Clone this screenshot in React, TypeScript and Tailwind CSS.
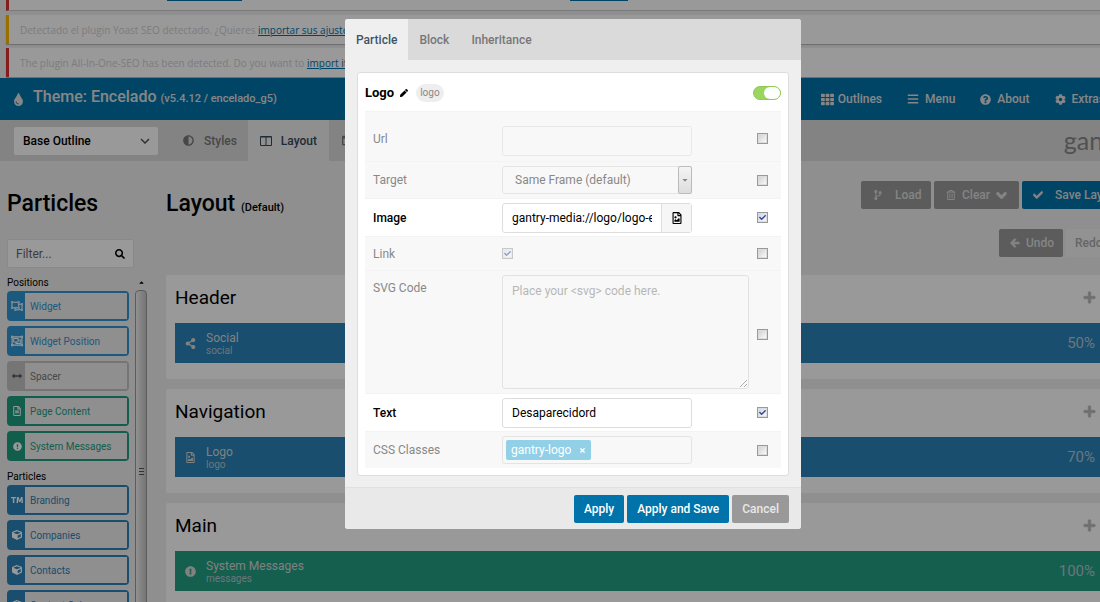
import React, { useState } from 'react';
import {
  FaAdjust,
  FaArrowLeft,
  FaArrowRight,
  FaArrowsAltH,
  FaBars,
  FaCaretDown,
  FaCaretUp,
  FaCheck,
  FaChevronDown,
  FaCodeBranch,
  FaCog,
  FaColumns,
  FaCube,
  FaExclamationCircle,
  FaPen,
  FaPlus,
  FaQuestionCircle,
  FaRegFileAlt,
  FaRegFileImage,
  FaRegObjectGroup,
  FaRegObjectUngroup,
  FaRegTrashAlt,
  FaSearch,
  FaShareAlt,
  FaTh,
  FaTimes,
  FaTint,
  FaTrademark,
} from 'react-icons/fa';

interface Particle {
  name: string;
  icon: React.ReactNode;
  tone: string;
}

const LIGHT = 'border-[#2f94d4] bg-[#2f94d4] text-[#2f94d4]';
const GREY = 'border-[#c4c4c4] bg-[#c4c4c4] text-[#777]';
const GREEN = 'border-[#1f9d80] bg-[#1f9d80] text-[#1f9d80]';
const BLUE = 'border-[#2a82b7] bg-[#2a82b7] text-[#2a82b7]';

const positions: Particle[] = [
  { name: 'Widget', icon: <FaRegObjectUngroup />, tone: LIGHT },
  { name: 'Widget Position', icon: <FaRegObjectGroup />, tone: LIGHT },
  { name: 'Spacer', icon: <FaArrowsAltH className="size-[10px] text-[#555]" />, tone: GREY },
  { name: 'Page Content', icon: <FaRegFileAlt className="size-[10px]" />, tone: GREEN },
  { name: 'System Messages', icon: <FaExclamationCircle className="size-[9px]" />, tone: GREEN },
];

const particles: Particle[] = [
  { name: 'Branding', icon: <FaTrademark />, tone: BLUE },
  { name: 'Companies', icon: <FaCube className="size-[10px]" />, tone: BLUE },
  { name: 'Contacts', icon: <FaCube className="size-[10px]" />, tone: BLUE },
  { name: 'Content Cubes', icon: <FaCube className="size-[10px]" />, tone: BLUE },
];

const sections = [
  { title: 'Header', name: 'Social', type: 'social', size: '50%', icon: <FaShareAlt />, color: 'bg-[#2a82b7]' },
  { title: 'Navigation', name: 'Logo', type: 'logo', size: '70%', icon: <FaRegFileImage />, color: 'bg-[#2a82b7]' },
  { title: 'Main', name: 'System Messages', type: 'messages', size: '100%', icon: <FaExclamationCircle />, color: 'bg-[#239e83]' },
];

const ParticleList: React.FC<{ title: string; items: Particle[] }> = ({ title, items }) => (
  <div>
    <h3 className="text-[10px] leading-4 text-black">{title}</h3>
    <ul className="flex flex-col gap-[5px]">
      {items.map((item) => (
        <li key={item.name} className={`flex h-[30px] rounded-sm border-2 text-[10px] ${item.tone}`}>
          <span className="flex w-4 shrink-0 items-center justify-center text-[12px] text-white">{item.icon}</span>
          <span className="flex flex-1 items-center bg-[#eee] pl-[5px] whitespace-nowrap">{item.name}</span>
        </li>
      ))}
    </ul>
  </div>
);

const Notice: React.FC<{ color: string; text: string; link: string }> = ({ color, text, link }) => (
  <div className={`mt-1 ml-1.5 h-[29px] border-l-[3px] bg-white pl-[11px] font-['Open_Sans',sans-serif] text-[10px] leading-[30px] whitespace-nowrap text-[#d0d0d0] shadow-[0_1px_1px_#bbb] ${color}`}>
    {text}{' '}
    <a href="#import" className="text-[#0073aa] underline">{link}</a>
  </div>
);

const Tick: React.FC<{ label: string; initial?: boolean; faded?: boolean }> = ({ label, initial = false, faded }) => {
  const [checked, setChecked] = useState(initial);
  return (
    <label className={`grid size-[11px] place-items-center ${faded ? 'opacity-50' : ''}`}>
      <input
        type="checkbox"
        aria-label={label}
        checked={checked}
        onChange={(e) => setChecked(e.target.checked)}
        className="peer col-start-1 row-start-1 size-[11px] appearance-none border border-[#999] bg-linear-to-br from-[#ccc] to-white shadow-[inset_0_0_0_1px_#ddd] checked:from-[#c9d2ea]"
      />
      <FaCheck className="pointer-events-none invisible col-start-1 row-start-1 size-[7px] text-[#33449a] peer-checked:visible" />
    </label>
  );
};

interface RowProps {
  label: string;
  id: string;
  height: string;
  active?: boolean;
  top?: boolean;
  children: React.ReactNode;
}

const Row: React.FC<RowProps> = ({ label, id, height, active, top, children }) => (
  <div className={`flex border-t border-[#f3f3f3] pl-2 text-[12px] ${top ? 'items-start pt-1' : 'items-center'} ${height} ${active ? 'bg-white text-black' : 'bg-[#f8f8f8] text-[#888]'}`}>
    <label htmlFor={id} className={`w-[129px] shrink-0 ${top ? 'mt-1' : ''} ${active ? 'font-medium' : ''}`}>{label}</label>
    <div className="flex-1">{children}</div>
    <div className={`flex w-6 shrink-0 ${top ? 'self-center' : ''}`}>
      <Tick label={`Override ${label}`} initial={active} />
    </div>
  </div>
);

const ParticleModal: React.FC = () => {
  const [image, setImage] = useState('gantry-media://logo/logo-encelado.png');
  const [text, setText] = useState('Desaparecidord');

  return (
    <div role="dialog" aria-label="Particle settings" className="w-[456px] overflow-hidden rounded-[3px] bg-[#efefef]">
      <div className="flex h-[41px] bg-[#dadada] text-[12px] font-medium text-[#777]">
        <button className="bg-[#efefef] px-[11px] text-[#3c5568]">Particle</button>
        <button className="px-[11px]">Block</button>
        <button className="px-[11px]">Inheritance</button>
      </div>

      <div className="p-3 pb-[11px]">
        <div className="rounded-[3px] border border-[#ddd] bg-white px-[7px] pb-[7px]">
          <div className="flex h-[38px] items-center pt-px">
            <h4 className="text-[13px] font-bold text-black">Logo</h4>
            <FaPen className="ml-1.5 size-[8px]" />
            <span className="ml-2 rounded-full bg-[#eee] px-1 text-[10px] leading-[18px] text-[#888]">logo</span>
            <label className="ml-auto flex h-[14px] w-7 justify-end rounded-full border border-[#8fc957] bg-[#9bd560]">
              <input type="checkbox" aria-label="Enabled" defaultChecked className="peer sr-only" />
              <span className="h-3 w-4 rounded-full bg-white" />
            </label>
          </div>

          <Row label="Url" id="url" height="h-[50px] pt-1">
            <input id="url" className="mt-1 block h-[30px] w-[190px] rounded-[3px] border border-[#e8e8e8] px-2" />
          </Row>
          <Row label="Target" id="target" height="h-[37px]">
            <div className="relative w-[190px]">
              <select id="target" className="block h-7 w-full appearance-none rounded-[3px] border border-[#e4e4e4] pl-3">
                <option>Same Frame (default)</option>
                <option>New Window</option>
              </select>
              <span className="pointer-events-none absolute inset-y-0 right-0 flex w-[14px] items-center justify-center rounded-xs border border-[#bbb] bg-linear-to-b from-[#f4f4f4] to-[#ddd]">
                <FaCaretDown className="size-2" />
              </span>
            </div>
          </Row>
          <Row label="Image" id="image" height="h-[38px]" active>
            <div className="flex h-[30px] w-[190px] rounded-[3px] border border-[#ddd]">
              <div className="flex min-w-0 flex-1 px-[9px]">
                <input id="image" value={image} onChange={(e) => setImage(e.target.value)} className="w-full min-w-0 outline-none" />
              </div>
              <button aria-label="Pick image" className="flex w-[30px] items-center justify-center border-l border-[#ddd] bg-[#f6f6f6]">
                <FaRegFileImage className="size-3" />
              </button>
            </div>
          </Row>
          <Row label="Link" id="link" height="h-[34px]">
            <Tick label="Link" initial faded />
          </Row>
          <Row label="SVG Code" id="svg" height="h-[123px]" top>
            <textarea id="svg" placeholder="Place your <svg> code here." className="block h-[114px] w-[247px] rounded-[3px] border border-[#ccc] px-[9px] py-1.5 opacity-50 placeholder:text-[#777]" />
          </Row>
          <Row label="Text" id="text" height="h-[38px]" active>
            <input id="text" value={text} onChange={(e) => setText(e.target.value)} className="block h-[30px] w-[190px] rounded-[3px] border border-[#ddd] px-[9px]" />
          </Row>
          <Row label="CSS Classes" id="css" height="h-[37px]">
            <div className="flex h-7 w-[190px] items-center rounded-[3px] border border-[#e4e4e4] pl-[3px]">
              <span className="flex h-5 shrink-0 items-center gap-2 rounded-xs bg-[#92d0e8] px-[5px] text-white">
                gantry-logo
                <button aria-label="Remove gantry-logo"><FaTimes className="size-[7px]" /></button>
              </span>
              <input id="css" className="w-full min-w-0 outline-none" />
            </div>
          </Row>
        </div>
      </div>

      <div className="flex h-[42px] items-center justify-end gap-[3px] border-t border-[#e0e0e0] bg-[#e9e9e9] pt-px pr-3 text-[12px] font-medium text-white">
        <button className="h-7 rounded-xs bg-[#0073aa] px-[10px]">Apply</button>
        <button className="h-7 rounded-xs bg-[#0073aa] px-[10px]">Apply and Save</button>
        <button className="h-7 rounded-xs bg-[#999] px-[10px] text-[#e8e8e8]">Cancel</button>
      </div>
    </div>
  );
};

const Toolbar: React.FC = () => (
  <div className="flex flex-col items-end gap-5 text-[12px] font-medium text-[#ddd]">
    <div className="flex gap-[3px]">
      <button className="flex h-7 w-[70px] items-center gap-3 rounded-xs bg-[#999] pl-3"><FaCodeBranch className="size-[10px]" />Load</button>
      <button className="flex h-7 w-[85px] items-center gap-1.5 rounded-xs bg-[#999] pl-3">
        <FaRegTrashAlt className="size-[10px]" />
        Clear
        <FaChevronDown className="size-[11px] stroke-current" strokeWidth={60} />
      </button>
      <button className="flex h-7 w-[104px] items-center gap-3 rounded-xs bg-[#0073aa] pl-[11px] whitespace-nowrap"><FaCheck className="size-[10px] stroke-current" strokeWidth={30} />Save Layout</button>
    </div>
    <div className="flex gap-[3px]">
      <button className="flex h-7 w-[64px] items-center gap-1.5 rounded-xs bg-[#999] pl-[11px]">
        <FaArrowLeft className="size-[10px] stroke-current" strokeWidth={50} />
        Undo
      </button>
      <button className="flex h-7 w-[60px] items-center gap-1 rounded-xs bg-[#f4f4f4] pl-[9px] text-[#aaa]">Redo<FaArrowRight className="size-[10px]" /></button>
    </div>
  </div>
);

const App: React.FC = () => {
  const [filter, setFilter] = useState('');

  return (
    <div className="relative h-screen overflow-hidden bg-[#eee] font-[Roboto,sans-serif] text-black">
      {/* the admin page is wider than the window, so it runs out on the right */}
      <div className="-mr-[46px] bg-[#eee]">
        <div className="ml-1.5 flex h-[11px] border-b border-l-[3px] border-b-[#ccc] border-l-[#dc3232] bg-white">
          <a href="#import" aria-label="Import settings" className="ml-[158px] h-px w-[75px] bg-[#0073aa]" />
          <a href="#import" aria-label="Import content" className="ml-[328px] h-px w-[58px] bg-[#0073aa]" />
        </div>
        <Notice color="border-l-[#ffb900]" text="Detectado el plugin Yoast SEO detectado. ¿Quieres" link="importar sus ajustes?" />
        <Notice color="border-l-[#dc3232]" text="The plugin All-In-One-SEO has been detected. Do you want to" link="import its settings?" />

        <header className="mt-px flex h-[42px] items-center bg-[#0073aa] pl-3 text-[#e0e0e0]">
          <FaTint className="size-[13px]" />
          <h1 className="ml-2 pb-1 text-[16px] font-medium whitespace-nowrap">
            Theme: Encelado <span className="text-[11px]">(v5.4.12 / encelado_g5)</span>
          </h1>
          <nav className="ml-auto flex gap-[25px] pr-[41px] text-[12px] font-medium">
            <a href="#outlines" className="flex items-center gap-1"><FaTh className="size-[13px]" />Outlines</a>
            <a href="#menu" className="flex items-center gap-1.5"><FaBars className="size-3" />Menu</a>
            <a href="#about" className="flex items-center gap-1.5"><FaQuestionCircle className="size-[11px]" />About</a>
            <a href="#extras" className="flex items-center gap-1.5"><FaCog className="size-[11px]" />Extras</a>
          </nav>
        </header>

        <div className="flex h-[41px] items-center bg-[#dadada] pl-[14px] text-[12px] font-medium">
          <div className="relative w-[144px]">
            <select aria-label="Outline" className="block h-7 w-full appearance-none rounded-xs bg-white pl-[9px]">
              <option>Base Outline</option>
            </select>
            <svg viewBox="0 0 10 6" className="pointer-events-none absolute top-[11px] right-2 h-1.5 w-[10px] fill-none stroke-[#555]" strokeWidth="1.5"><path d="M1 1l4 4 4-4" /></svg>
          </div>
          <a href="#styles" className="ml-[14px] flex h-full items-center gap-[10px] px-[11px] text-[#777]"><FaAdjust className="size-[11px]" />Styles</a>
          <a href="#layout" className="flex h-full items-center gap-[9px] bg-[#eee] px-3 text-[#37495a]">
            <svg viewBox="0 0 12 12" className="size-3 fill-none stroke-current"><path d="M.5 1.5h11v9H.5zM6 2v8M1 2h10" /></svg>
            Layout
          </a>
          <a href="#page" aria-label="Page settings" className="flex h-full items-center px-[13px] text-[#777]"><FaColumns className="size-[11px]" /></a>
          <span className="ml-auto pr-3 font-[Lato,sans-serif] text-[25px] font-normal text-[#888]">gantry</span>
        </div>

        <div className="flex">
          <aside className="flex w-[147px] shrink-0 flex-col pl-[7px]">
            <h2 className="mt-[27px] text-[23px] leading-8 font-medium">Particles</h2>
            <div className="mt-[19px] mr-[13px] flex h-[29px] items-center rounded-xs border border-[#e4e4e4] bg-white px-2">
              <input
                type="text"
                aria-label="Filter particles"
                placeholder="Filter..."
                value={filter}
                onChange={(e) => setFilter(e.target.value)}
                className="w-full min-w-0 text-[12px] outline-none placeholder:text-[#666]"
              />
              <FaSearch className="size-[10px] shrink-0" />
            </div>
            <div className="mt-[7px] flex">
              <div className="flex w-[122px] flex-col gap-2">
                <ParticleList title="Positions" items={positions.filter((p) => p.name.toLowerCase().includes(filter.toLowerCase()))} />
                <ParticleList title="Particles" items={particles.filter((p) => p.name.toLowerCase().includes(filter.toLowerCase()))} />
              </div>
              <div className="ml-1.5 flex w-3 flex-col items-center">
                <FaCaretUp className="my-1 size-[7px]" />
                <div className="flex w-full flex-1 items-center justify-center rounded-t-sm border border-[#999] bg-linear-to-r from-[#f2f2f2] to-[#c4c4c4] pt-8">
                  <svg viewBox="0 0 5 7" className="h-[7px] w-[5px] stroke-[#555]"><path d="M0 .5h5M0 3.5h5M0 6.5h5" /></svg>
                </div>
              </div>
            </div>
          </aside>

          <main className="min-w-0 flex-1 pr-5 pl-[19px]">
            <div className="flex h-[114px] items-start justify-between pt-5">
              <h2 className="mt-[7px] text-[23px] leading-8 font-medium">
                Layout <span className="text-[11px]">(Default)</span>
              </h2>
              <Toolbar />
            </div>
            <div className="flex flex-col gap-[10px]">
              {sections.map((s) => (
                <section key={s.title} className="rounded-xs bg-white px-[9px] pb-4">
                  <div className="flex h-12 items-center justify-between pb-px">
                    <h3 className="text-[19px]">{s.title}</h3>
                    <button aria-label={`Add to ${s.title}`} className="mr-[21px] pb-0.5 text-[#bbb]"><FaPlus className="size-[13px] stroke-current" strokeWidth={30} /></button>
                  </div>
                  <div className={`flex h-10 items-center pr-[22px] pl-[10px] text-[#d8d8d8] ${s.color}`}>
                    <span className="flex w-[21px] text-[11px]">{s.icon}</span>
                    <div className="flex-1">
                      <div className="text-[12px] leading-4">{s.name}</div>
                      <div className="text-[10px] leading-[10px] text-[#b5c5cf]">{s.type}</div>
                    </div>
                    <span className="text-[15px] text-[#b5c5cf]">{s.size}</span>
                  </div>
                </section>
              ))}
            </div>
          </main>
        </div>
      </div>

      <div className="absolute inset-y-0 left-0 -right-[46px] flex items-start justify-center bg-black/40 pt-[19px]">
        <ParticleModal />
      </div>
    </div>
  );
};

export default App;
